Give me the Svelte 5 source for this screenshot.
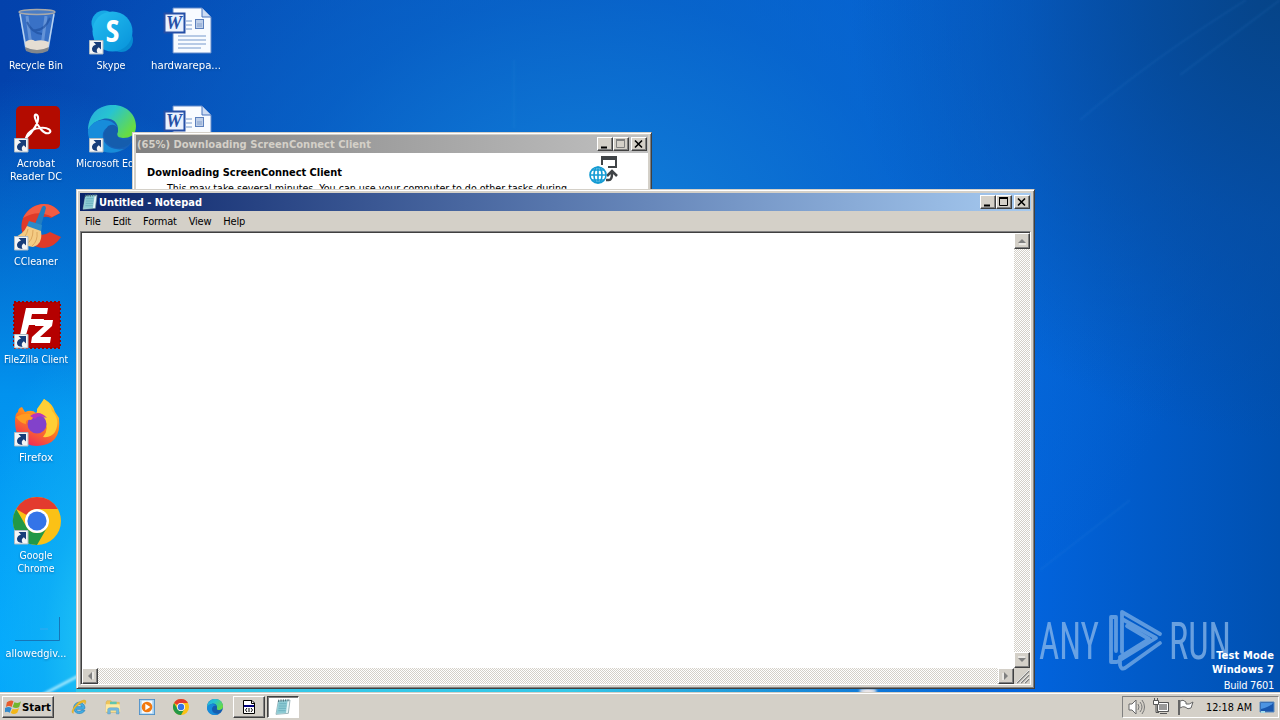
<script lang="ts">
    type DesktopIcon = { icon: string; label: string[]; widths: number[]; shortcut?: boolean };

    const icons: DesktopIcon[] = [
        { icon: "bin", label: ["Recycle Bin"], widths: [54] },
        { icon: "acrobat", label: ["Acrobat", "Reader DC"], widths: [38, 52], shortcut: true },
        { icon: "ccleaner", label: ["CCleaner"], widths: [44], shortcut: true },
        { icon: "filezilla", label: ["FileZilla Client"], widths: [64], shortcut: true },
        { icon: "firefox", label: ["Firefox"], widths: [34], shortcut: true },
        { icon: "chrome", label: ["Google", "Chrome"], widths: [33, 37], shortcut: true },
        { icon: "blank", label: ["allowedgiv..."], widths: [61] },
        { icon: "skype", label: ["Skype"], widths: [29], shortcut: true },
        { icon: "edge", label: ["Microsoft Edge"], widths: [70], shortcut: true },
    ];

    const documents: DesktopIcon[] = [
        { icon: "word", label: ["hardwarepa..."], widths: [70] },
        { icon: "word", label: [], widths: [] },
    ];

    const menu = ["File", "Edit", "Format", "View", "Help"];
    const pinned = ["ie", "explorer", "player", "chrome", "edge"];
</script>

{#snippet glyph(name: string)}
    {#if name === "bin"}
        <path d="M6 5L12 42Q24 50 36 42L42 5Z" fill="#568bd4" fill-opacity=".65" />
        <path d="M7 7L13 41M41 7L35 41" stroke="#b7d2f1" stroke-width="1.5" />
        <path d="M14 9L18 39M33 9L29 39" stroke="#a8c8f0" stroke-opacity=".4" stroke-width="3" />
        <path d="M20 23Q31 25 37 11M14 15Q19 26 29 27" stroke="#1d4f9e" stroke-opacity=".65" stroke-width="2" fill="none" />
        <path d="M12 35Q18 31 22 34Q29 32 36 35L35 41Q25 46 13 41Z" fill="#e5ddd2" />
        <path d="M12 40Q24 46 36 40L35 44Q24 49 13 44Z" fill="#83878c" />
        <ellipse cx="24" cy="5" rx="18" ry="2.5" fill="#4b7dc4" stroke="#a9a9a9" stroke-width="1.3" />
    {:else if name === "acrobat"}
        <rect x="3" y="1" width="44" height="43" rx="5" fill="#b30b00" />
        <path d="M13 33C20 27 26 17 25 12C24 8 21 9 22 13C24 21 31 30 36 28C40 26 35 22 27 23C22 23 15 26 13 33Z" fill="none" stroke="#fff" stroke-width="2.1" />
    {:else if name === "ccleaner"}
        <path d="M47 10C38-4 18-1 10 15C4 31 16 45 31 45Q42 44 48 34L37 29Q28 35 23 28Q20 20 26 16Q32 12 38 15Z" fill="#df3a28" />
        <path d="M47 10C38-4 18-1 10 15Q25 6 39 14Z" fill="#f25c43" />
        <path d="M29 4Q32 1 33 5L28 23L22 21Z" fill="#227dc0" />
        <path d="M16 18L29 22L28 30L14 23Z" fill="#2b8bc9" />
        <path d="M14 23L28 28Q30 41 20 44Q7 42 1 34Q10 32 14 23Z" fill="#f4cb83" />
        <path d="M15 26Q13 36 6 37M20 27Q20 38 13 41M24 29Q25 38 19 43" fill="none" stroke="#dca75e" />
    {:else if name === "filezilla"}
        <rect x="1" y="1" width="46" height="46" fill="#b50000" stroke="#9d0000" stroke-width="2" stroke-dasharray="2 2" />
        <path d="M13 7H35L34 13H19L18 18H31L30 24H16L13 34H7Z" fill="#fff" />
        <path d="M23 19H40L39 25L27 36H38L37 42H18L19 36L31 25H22Z" fill="#fff" />
    {:else if name === "firefox"}
        <path d="M27 8L31 0Q40 5 42 13L46 19Q49 46 24 47Q2 46 2 22Q2 14 5 13Q5 9 9 8L12 13Q19 10 23 14Z" fill="url(#foxFill)" />
        <path d="M24 10L31 0Q37 4 39 12Q48 21 42 33Q38 39 30 38Q37 30 31 19Q28 13 24 14Z" fill="#ffcf36" />
        <circle cx="24" cy="25" r="9.5" fill="#8242cb" />
        <path d="M3 18Q13 12 22 17L18 21Q12 20 13 25Q7 24 3 18" fill="#ff9c22" />
        <path d="M17 17Q26 10 34 19Q25 15 22 20Z" fill="#b834bc" />
    {:else if name === "chrome"}
        <circle cx="24" cy="24" r="24" fill="#fbc116" />
        <path d="M3.2 12A24 24 0 0 1 44.8 12H24A12 12 0 0 0 13.6 18Z" fill="#e33b2e" />
        <path d="M3.2 12A24 24 0 0 0 24 48L34.4 30A12 12 0 0 1 13.6 30Z" fill="#229847" />
        <circle cx="24" cy="24" r="12" fill="#fff" />
        <circle cx="24" cy="24" r="9.6" fill="#3474e8" />
    {:else if name === "blank"}
        <path d="M2 45.5H46.5V22" fill="none" stroke="#1676b8" />
        <path d="M27 34H35" stroke="#36a9ef" />
    {:else if name === "skype"}
        <circle cx="16" cy="16" r="12.5" fill="#17a9e5" />
        <circle cx="33" cy="33" r="12" fill="#078bd1" />
        <circle cx="24.5" cy="24.5" r="20" fill="url(#skypeFill)" />
        <text x="24.5" y="35" text-anchor="middle" font-family="Open Sans, sans-serif" font-size="31" font-weight="700" fill="#fff">S</text>
    {:else if name === "edge"}
        <circle cx="24" cy="24" r="24" fill="#1762b8" />
        <path d="M0 25C1 7 12 0 25 0C39 0 48 10 48 21C48 30 42 33 35 33Q26 32 30 26C31 16 22 12 15 14Q5 16 0 25Z" fill="url(#edgeFill)" />
        <path d="M0 25Q4 16 14 15Q24 14 29 22Q18 19 15 28C13 40 25 46 36 44C22 53-1 45 0 25Z" fill="#178cda" />
        <path d="M20 21Q29 17 30 26Q27 33 35 35Q42 36 46 31Q43 42 31 43Q16 42 16 28Z" fill="#155dad" />
    {:else if name === "word"}
        <path d="M10 1H39L48 10V46H10Z" fill="#f8fbff" stroke="#638ac9" />
        <path d="M39 1V10H48" fill="#cddcf3" stroke="#4772bd" />
        <path d="M23 14H29M23 18H29M23 22H29M15 29H43M15 33H43M15 37H43M15 41H38" stroke="#7799cc" />
        <rect x="32.5" y="12.5" width="8" height="9" fill="#bdcee8" stroke="#5c80bd" />
        <path d="M34 19H39M34 17H39" stroke="#86a1cc" fill="none" />
        <rect x="1.5" y="6.5" width="20" height="19" fill="#eaf1fe" stroke="#254fa6" stroke-width="2" />
        <text x="11" y="22" text-anchor="middle" font-family="Liberation Serif, serif" font-size="18" font-style="italic" font-weight="700" textLength="17" fill="#254fa6">W</text>
    {:else if name === "ie"}
        <path d="M38 31H15Q18 39 25 37Q30 36 33 33L42 34C34 49 9 47 8 27C8 11 26 4 37 15Q42 20 42 28ZM16 23H33Q30 16 24 16Q18 17 16 23Z" fill="#41aee4" fill-rule="evenodd" stroke="#2580bd" stroke-width="2" />
        <path d="M7 43Q-2 41 9 24Q23 5 38 3Q49 2 42 16Q42 4 25 16Q10 26 7 38Z" fill="#efbb26" stroke="#cb981e" />
    {:else if name === "explorer"}
        <path d="M3 10L6 5H18L21 10H43V40H3Z" fill="#efc55b" stroke="#c89d36" />
        <path d="M15 8H35V19H15Z" fill="#5fc5ae" />
        <path d="M3 16H44L46 38H2Z" fill="#ffeaa2" />
        <path d="M8 45V31Q9 26 15 26H36Q42 26 42 32V45H34V34H16V45Z" fill="#75b9df" stroke="#448eb7" />
    {:else if name === "player"}
        <rect x="1" y="1" width="46" height="46" fill="#a7d1f2" stroke="#478bc6" stroke-width="3" />
        <rect x="8" y="5" width="32" height="38" fill="#f5f9fc" />
        <circle cx="24" cy="24" r="16" fill="#f27910" />
        <path d="M19 14L34 24L19 34Z" fill="#fff" />
    {:else if name === "notepad"}
        <path d="M10 6L45 3L40 43L3 46Z" fill="#e8f7f9" stroke="#70929a" stroke-width="2" />
        <path d="M10 6L38 4L33 42L4 45Z" fill="#8ecbd4" />
        <path d="M13 14H34M12 21H34M11 28H33M10 35H32" stroke="#5da6b5" stroke-width="2" />
        <path d="M11 9V2M18 8V1M25 8V1M32 7V1M39 7V1" stroke="#486d76" stroke-width="3" />
    {/if}
{/snippet}

{#snippet desktopIcon(item: DesktopIcon)}
    <div class="desktop-icon">
        <svg class="large-icon" viewBox="0 0 48 48">
            {@render glyph(item.icon)}
            {#if item.shortcut}
                <path d="M1.5 33.5H15V47H1.5Z" fill="#f4f5f6" stroke="#aebbc5" />
                <path d="M5.5 35H13V42.5L10.8 40.3Q7.5 42.5 9.5 46Q3.5 45.5 4 41.5Q4.5 38.5 8 37.5Z" fill="#173d79" />
            {/if}
        </svg>
        {#each item.label as line, index}
            <svg class="icon-label" viewBox="0 0 75 13">
                <text x="37" y="10" text-anchor="middle" textLength={item.widths[index]} lengthAdjust="spacingAndGlyphs">{line}</text>
            </svg>
        {/each}
    </div>
{/snippet}

{#snippet caption(disabled: boolean)}
    <div class="window-buttons">
        <button aria-label="Minimize"><svg viewBox="0 0 12 10"><path d="M2 8.5H8" stroke="#000" stroke-width="2" /></svg></button>
        <button aria-label="Maximize" class:disabled><svg viewBox="0 0 12 10"><path d="M1.5 1V8.5H9.5V1Z" fill="none" stroke="currentColor" /><path d="M1 1H10" stroke="currentColor" stroke-width="2" /></svg></button>
        <button aria-label="Close" class="close"><svg viewBox="0 0 12 10"><path d="M2 1.5L9 8.5M9 1.5L2 8.5" stroke="#000" stroke-width="1.6" /></svg></button>
    </div>
{/snippet}

{#snippet arrow(direction: string)}
    <button class="scroll-button {direction}" aria-label="Scroll {direction}">
        <svg viewBox="0 0 10 10"><path d="M1 7L5 3L9 7Z" fill="#808080" /><path d="M2 8H9" stroke="#fff" /></svg>
    </button>
{/snippet}

{#snippet track()}
    <svg class="track"><rect width="100%" height="100%" fill="url(#dither)" /></svg>
{/snippet}

<div class="desktop">
    <svg class="wallpaper-lines" viewBox="0 0 1280 720">
        <defs>
            <linearGradient id="skypeFill" x1="0" y1="0" x2="1" y2="1"><stop stop-color="#25bff0" /><stop offset="1" stop-color="#0792da" /></linearGradient>
            <linearGradient id="edgeFill" x1="0" y1="0" x2="1" y2=".6"><stop stop-color="#29a9dd" /><stop offset=".45" stop-color="#27c4d1" /><stop offset="1" stop-color="#68dc42" /></linearGradient>
            <linearGradient id="foxFill" x1=".8" y1="0" x2=".3" y2="1"><stop stop-color="#ffd92b" /><stop offset=".5" stop-color="#ff831c" /><stop offset="1" stop-color="#f02758" /></linearGradient>
            <linearGradient id="horizon"><stop stop-color="#35c8e8" /><stop offset=".55" stop-color="#35c8e8" /><stop offset="1" stop-color="#35c8e8" stop-opacity="0" /></linearGradient>
            <pattern id="dither" width="2" height="2" patternUnits="userSpaceOnUse">
                <rect width="2" height="2" fill="#fff" />
                <path d="M0 0H1V1H0ZM1 1H2V2H1Z" fill="#d4d0c8" />
            </pattern>
            <filter id="soften"><feGaussianBlur stdDeviation="1" /></filter>
        </defs>
        <rect x="76" y="689" width="900" height="4" fill="url(#horizon)" />
        <g filter="url(#soften)">
            <path d="M42 695L84 673" stroke="#c1f2ff" stroke-opacity=".8" stroke-width="3" />
            <path d="M1080 120Q1150 60 1246 0M1180 75L1280 0M1040 570L1130 500" stroke="#4a9ee5" stroke-opacity=".11" stroke-width="2" fill="none" />
            <path d="M514 60V128" stroke="#50a2e6" stroke-opacity=".08" stroke-width="2" />
            <ellipse cx="868" cy="691" rx="9" ry="2" fill="#fff0e9" />
        </g>
    </svg>

    <div class="icon-grid">
        {#each icons as item}
            {@render desktopIcon(item)}
        {/each}
    </div>
    <div class="icon-grid documents">
        {#each documents as item}
            {@render desktopIcon(item)}
        {/each}
    </div>

    <div class="watermark">
        <svg viewBox="0 0 194 66">
            <g fill="#91bceb" font-family="Roboto, sans-serif" font-size="52" font-weight="400">
                <text x="1" y="51" textLength="60" lengthAdjust="spacingAndGlyphs">ANY</text>
                <text x="131" y="51" textLength="62" lengthAdjust="spacingAndGlyphs">RUN</text>
            </g>
            <path d="M78 9H73V54H79L118 30L84 11V44M78 9V43M84 14V4L122 26M89 18L111 31L82 49V57Q83 62 87 60L122 35" fill="none" stroke="#80b2e8" stroke-width="3.8" stroke-linejoin="round" stroke-linecap="round" />
        </svg>
    </div>
    <div class="build">
        <b>Test Mode</b>
        <b>Windows 7</b>
        <span>Build 7601</span>
    </div>

    <section class="window installer">
        <header class="title-bar inactive">
            <svg class="title-text" viewBox="0 0 300 18"><text x="1" y="13" textLength="234" lengthAdjust="spacingAndGlyphs">(65%) Downloading ScreenConnect Client</text></svg>
            {@render caption(true)}
        </header>
        <div class="installer-body">
            <svg class="installer-copy" viewBox="0 0 440 36">
                <text x="11" y="23" font-weight="700" textLength="195" lengthAdjust="spacingAndGlyphs">Downloading ScreenConnect Client</text>
                <text x="31" y="39" textLength="400" lengthAdjust="spacingAndGlyphs">This may take several minutes. You can use your computer to do other tasks during</text>
            </svg>
            <svg class="connect-icon" viewBox="0 0 30 30">
                <path d="M13 9V1H27V11H19" fill="none" stroke="#404447" stroke-width="2" /><path d="M12 2H28" stroke="#404447" stroke-width="4" />
                <path d="M17 24H20Q23 24 23 17M18 20L23 15L28 20" fill="none" stroke="#404447" stroke-width="2.5" />
                <g fill="none" stroke="#139bd3" stroke-width="1.6"><circle cx="9" cy="19" r="8" /><ellipse cx="9" cy="19" rx="4" ry="8" /><path d="M1 19H17M3 14H15M3 24H15M9 11V27" /></g>
            </svg>
        </div>
    </section>

    <main class="window notepad">
        <header class="title-bar">
            <svg class="title-icon" viewBox="0 0 48 48">{@render glyph("notepad")}</svg>
            <svg class="title-text" viewBox="0 0 300 18"><text x="1" y="13" textLength="103" lengthAdjust="spacingAndGlyphs">Untitled - Notepad</text></svg>
            {@render caption(false)}
        </header>
        <nav>
            {#each menu as item}<span>{item}</span>{/each}
        </nav>
        <div class="editor">
            <div class="paper"></div>
            <div class="scroll vertical">{@render track()}{@render arrow("up")}{@render arrow("down")}</div>
            <div class="scroll horizontal">{@render track()}{@render arrow("left")}{@render arrow("right")}</div>
            <svg class="resize" viewBox="0 0 16 16">
                <path d="M3 15L15 3M7 15L15 7M11 15L15 11" stroke="#808080" stroke-width="1.5" />
                <path d="M2 15L15 2M6 15L15 6M10 15L15 10" stroke="#fff" stroke-width=".7" />
            </svg>
        </div>
    </main>

    <footer class="taskbar">
        <button class="start">
            <svg class="flag" viewBox="0 0 18 18">
                <path d="M2 4Q6 1 9 3L7 9Q4 7 1 9Z" fill="#e75c2c" />
                <path d="M10 4Q14 6 17 3L15 9Q12 11 8 9Z" fill="#72b62d" />
                <path d="M0 10Q4 8 7 10L5 15Q2 13-1 15Z" fill="#338acb" />
                <path d="M8 11Q12 12 15 10L13 15Q9 18 6 15Z" fill="#f3b719" />
            </svg>
            <svg class="start-text" viewBox="0 0 29 18"><text x="0" y="13" textLength="29" lengthAdjust="spacingAndGlyphs">Start</text></svg>
        </button>
        <div class="quick-launch">
            {#each pinned as name}
                <svg viewBox="0 0 48 48">{@render glyph(name)}</svg>
            {/each}
        </div>
        <button class="task" aria-label="ScreenConnect installer">
            <svg viewBox="0 0 16 16"><path d="M2.5 1.5H11L13.5 4V14.5H2.5Z" fill="#fff" stroke="#000" /><path d="M10.5 1V4.5H14" fill="none" stroke="#000" /><path d="M3 6H13V8H3Z" fill="#000080" /><path d="M6 9L4.5 11L6 13M10 9L11.5 11L10 13M8 9V13" fill="none" stroke="#000" /></svg>
        </button>
        <button class="task active" aria-label="Notepad"><svg viewBox="0 0 48 48">{@render glyph("notepad")}</svg></button>
        <div class="tray">
            <svg viewBox="0 0 18 18"><path d="M1 6H4L8 2V16L4 12H1Z" fill="#fff" stroke="#666" /><path d="M10 6Q12 9 10 12M12 4Q16 9 12 14M14 2Q19 9 14 16" fill="none" stroke="#777" /></svg>
            <svg viewBox="0 0 18 18"><path d="M5.5 4.5H16.5V13.5H5.5Z" fill="#999" stroke="#555" /><path d="M6.5 5.5H15.5V12.5H6.5Z" fill="none" stroke="#fff" /><path d="M8 15.5H15" stroke="#555" /><path d="M1.5 2.5H6.5V6.5H1.5Z" fill="#fff" stroke="#555" /><path d="M2.5 0V3M5.5 0V3M4 7V14.5H7" fill="none" stroke="#555" /></svg>
            <svg viewBox="0 0 18 18"><path d="M3 2V17" stroke="#666" stroke-width="2" /><path d="M4 3Q7 1 10 4V6Q13 7 17 4L15 10Q12 12 9 9Q7 8 4 10Z" fill="#fff" stroke="#666" /></svg>
            <svg class="clock" viewBox="0 0 47 18"><text x="0" y="13" textLength="46" lengthAdjust="spacingAndGlyphs">12:18 AM</text></svg>
            <svg class="show-desktop" viewBox="0 0 16 16"><path d="M1 3H15V13H1Z" fill="#1857ae" stroke="#5b8bbd" /><path d="M2 4H14Q11 8 2 10Z" fill="#4c94e2" /><path d="M2 13H6" stroke="#a5dce9" stroke-width="2" /></svg>
        </div>
    </footer>
</div>

<style>
    :global(body) {
        margin: 0;
        overflow: hidden;
    }

    .desktop {
        position: relative;
        width: 1280px;
        height: 720px;
        overflow: hidden;
        font-family: "DejaVu Sans Condensed", "DejaVu Sans", sans-serif;
        font-stretch: condensed;
        font-size: 11px;
        background:
            radial-gradient(ellipse 150px 320px at 110px 650px, #28ccf5 0%, #14b6f5a0 45%, transparent 100%),
            radial-gradient(ellipse 420px 570px at 0 650px, #00a6ff 0%, #0292ee 45%, transparent 100%),
            radial-gradient(ellipse 430px 440px at 1280px 0, #064488 0%, #074c9fb0 50%, transparent 100%),
            radial-gradient(ellipse 620px 490px at 590px 240px, #1281db 0%, #096bcfa0 50%, transparent 100%),
            linear-gradient(90deg, #0342ac 0%, #0754bd 45%, #0264de 80%, #0050b0 100%);
    }

    button {
        display: flex;
        align-items: center;
        justify-content: center;
        box-sizing: border-box;
        padding: 0;
        border: 1px solid;
        border-color: #fff #404040 #404040 #fff;
        background: #d4d0c8;
        box-shadow: inset -1px -1px #808080;
        color: #000;
    }

    .wallpaper-lines {
        position: absolute;
        width: 1280px;
        height: 720px;
    }

    .icon-grid {
        position: absolute;
        left: -1px;
        display: grid;
        grid-template-rows: repeat(7, 98px);
        grid-auto-columns: 75px;
        grid-auto-flow: column;
    }

    .documents {
        left: 149px;
    }

    .desktop-icon {
        padding-top: 7px;
    }

    .large-icon {
        display: block;
        width: 48px;
        height: 48px;
        margin: 0 0 4px 14px;
        overflow: visible;
    }

    .icon-label {
        display: block;
        width: 75px;
        height: 13px;
        overflow: visible;
        fill: #fff;
        filter: drop-shadow(0 1px 1px #00377380);
    }

    .window {
        position: absolute;
        box-sizing: border-box;
        background: #d4d0c8;
        border: 1px solid;
        border-color: #d4d0c8 #404040 #404040 #d4d0c8;
        box-shadow: inset 1px 1px #fff, inset -1px -1px #808080;
    }

    .installer {
        left: 132px;
        top: 132px;
        width: 520px;
        height: 180px;
        padding: 2px 3px;
    }

    .notepad {
        left: 76px;
        top: 189px;
        width: 959px;
        height: 500px;
        padding: 3px;
        display: flex;
        flex-direction: column;
    }

    .title-bar {
        display: flex;
        align-items: center;
        height: 18px;
        background: linear-gradient(90deg, #0a246a, #a6caf0);
        fill: #fff;
        font-weight: 700;
    }

    .inactive {
        background: linear-gradient(90deg, #808080, #c0c0c0);
        fill: #d4d0c8;
    }

    .title-icon {
        width: 16px;
        height: 16px;
        margin-left: 2px;
    }

    .title-text {
        width: 300px;
        height: 18px;
    }

    .window-buttons {
        display: flex;
        margin-left: auto;
        margin-right: 1px;
    }

    .window-buttons button {
        width: 16px;
        height: 14px;
    }

    .window-buttons svg {
        width: 12px;
        height: 10px;
    }

    .window-buttons .close {
        margin-left: 2px;
    }

    .window-buttons .disabled {
        color: #808080;
    }

    .installer-body {
        display: flex;
        height: 155px;
        background: #fff;
    }

    .installer-copy {
        width: 440px;
        height: 36px;
        overflow: visible;
    }

    .connect-icon {
        width: 30px;
        height: 30px;
        margin: 3px 0 0 13px;
    }

    nav {
        display: flex;
        align-items: center;
        gap: 12px;
        height: 20px;
        padding-left: 5px;
        letter-spacing: -0.2px;
    }

    .editor {
        display: grid;
        grid-template: minmax(0, 1fr) 16px / minmax(0, 1fr) 16px;
        flex: 1;
        border: 1px solid;
        border-color: #808080 #fff #fff #808080;
        box-shadow: inset 1px 1px #404040;
        padding: 1px 0 0 1px;
    }

    .paper {
        background: #fff;
    }

    .scroll {
        position: relative;
        display: flex;
        justify-content: space-between;
    }

    .track {
        position: absolute;
        width: 100%;
        height: 100%;
    }

    .vertical {
        flex-direction: column;
    }

    .scroll-button {
        position: relative;
        width: 16px;
        height: 16px;
    }

    .scroll-button svg {
        width: 10px;
        height: 10px;
    }

    .down svg {
        transform: rotate(180deg);
    }

    .left svg {
        transform: rotate(-90deg);
    }

    .right svg {
        transform: rotate(90deg);
    }

    .resize {
        width: 16px;
        height: 16px;
    }

    .watermark {
        position: absolute;
        left: 1038px;
        top: 608px;
        opacity: 0.72;
    }

    .watermark svg {
        width: 194px;
        height: 66px;
        overflow: visible;
    }

    .build {
        position: absolute;
        right: 6px;
        bottom: 25px;
        display: flex;
        flex-direction: column;
        align-items: flex-end;
        color: #fff;
        line-height: 14px;
        letter-spacing: 0.15px;
    }

    .build span {
        line-height: 18px;
        letter-spacing: -0.3px;
    }

    .taskbar {
        position: absolute;
        left: 0;
        bottom: 0;
        box-sizing: border-box;
        display: flex;
        align-items: center;
        width: 1280px;
        height: 28px;
        padding: 1px 1px 0 2px;
        border-top: 1px solid #d4d0c8;
        background: #d4d0c8;
        box-shadow: inset 0 1px #fff;
    }

    .start {
        width: 52px;
        height: 22px;
        font: inherit;
        font-weight: 700;
    }

    .flag {
        width: 17px;
        height: 18px;
    }

    .start-text {
        width: 29px;
        height: 18px;
    }

    .quick-launch {
        display: flex;
        gap: 18px;
        margin-left: 17px;
    }

    .quick-launch svg {
        width: 16px;
        height: 16px;
    }

    .task {
        width: 32px;
        height: 22px;
        margin-left: 10px;
    }

    .task svg {
        width: 16px;
        height: 16px;
    }

    .task.active {
        margin-left: 2px;
        border-color: #404040 #fff #fff #404040;
        background: #fff;
        box-shadow: inset 1px 1px #808080;
    }

    .tray {
        display: flex;
        align-items: center;
        box-sizing: border-box;
        width: 157px;
        height: 22px;
        margin-left: auto;
        padding-left: 5px;
        border: 1px solid;
        border-color: #808080 #fff #fff #808080;
    }

    .tray svg {
        width: 18px;
        height: 18px;
        margin-right: 6px;
    }

    .tray .clock {
        width: 47px;
        margin-left: 6px;
    }

    .tray .show-desktop {
        width: 16px;
        margin-right: 0;
    }
</style>
